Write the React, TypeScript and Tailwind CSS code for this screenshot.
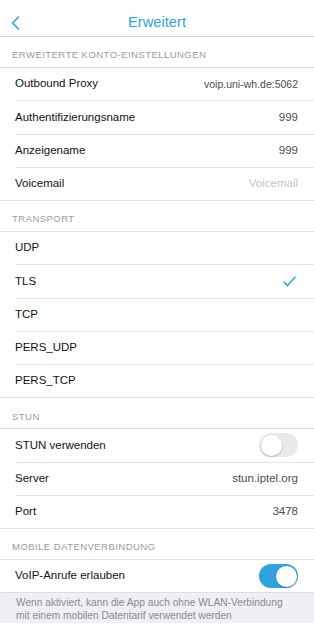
import React from "react";

const font = { fontFamily: '"Liberation Sans", Arial, sans-serif' };

function Header({ text }: { text: string }) {
  return (
    <div className="h-[31px] flex items-end pb-[7px] pl-[12px] border-b border-[#dedede] text-[9.6px] text-[#9b9b9f] tracking-[0.4px] leading-none">
      {text}
    </div>
  );
}

function Row({
  label,
  last,
  children,
}: {
  label: string;
  last?: boolean;
  children?: React.ReactNode;
}) {
  return (
    <div className={`h-[33.25px] pl-[15px] bg-white ${last ? "border-b border-[#dedede]" : ""}`}>
      <div
        className={`h-full flex items-center justify-between pr-[16px] ${last ? "" : "border-b border-[#e3e3e3]"}`}
      >
        <span className="text-[11.5px] text-[#111111] leading-none">{label}</span>
        {children}
      </div>
    </div>
  );
}

function Value({ text, placeholder, small }: { text: string; placeholder?: boolean; small?: boolean }) {
  return (
    <span
      className={`leading-none ${small ? "text-[10.5px]" : "text-[11.5px]"} ${placeholder ? "text-[#c4c4c8]" : "text-[#4d4d4d]"}`}
    >
      {text}
    </span>
  );
}

function Check() {
  return (
    <svg width="13" height="11" viewBox="0 0 13 11" className="mr-[2px]">
      <path d="M1 6 L4.6 9.6 L12 1" fill="none" stroke="#2fa3df" strokeWidth="1.5" strokeLinecap="round" strokeLinejoin="round" />
    </svg>
  );
}

function Toggle({ on }: { on: boolean }) {
  if (on) {
    return (
      <div className="w-[39px] h-[24px] rounded-full bg-[#2fa3df] flex items-center justify-end pr-[1.5px]">
        <div className="w-[21px] h-[21px] rounded-full bg-white shadow-[0_1px_2px_rgba(0,0,0,0.25)]" />
      </div>
    );
  }
  return (
    <div className="w-[39px] h-[24px] rounded-full bg-[#e9e9ea] flex items-center justify-start pl-[1.5px]">
      <div className="w-[21px] h-[21px] rounded-full bg-white shadow-[0_1px_2px_rgba(0,0,0,0.25)]" />
    </div>
  );
}

export default function App() {
  return (
    <div className="w-[314px] h-[633px] bg-white overflow-hidden" style={font}>
      <div className="h-[37px] border-b border-[#cfcfd1] relative flex items-center justify-center pt-[8px]">
        <svg width="9" height="14" viewBox="0 0 9 14" className="absolute left-[11px] top-[16px]">
          <path d="M7.5 1 L1.5 7 L7.5 13" fill="none" stroke="#2fa3df" strokeWidth="1.6" strokeLinecap="round" strokeLinejoin="round" />
        </svg>
        <span className="text-[14.7px] text-[#2ba6de] leading-none">Erweitert</span>
      </div>

      <Header text="ERWEITERTE KONTO-EINSTELLUNGEN" />
      <Row label="Outbound Proxy">
        <Value text="voip.uni-wh.de:5062" small />
      </Row>
      <Row label="Authentifizierungsname">
        <Value text="999" />
      </Row>
      <Row label="Anzeigename">
        <Value text="999" />
      </Row>
      <Row label="Voicemail" last>
        <Value text="Voicemail" placeholder />
      </Row>

      <Header text="TRANSPORT" />
      <Row label="UDP" />
      <Row label="TLS">
        <Check />
      </Row>
      <Row label="TCP" />
      <Row label="PERS_UDP" />
      <Row label="PERS_TCP" last />

      <Header text="STUN" />
      <Row label="STUN verwenden">
        <Toggle on={false} />
      </Row>
      <Row label="Server">
        <Value text="stun.iptel.org" />
      </Row>
      <Row label="Port" last>
        <Value text="3478" />
      </Row>

      <Header text="MOBILE DATENVERBINDUNG" />
      <Row label="VoIP-Anrufe erlauben" last>
        <Toggle on={true} />
      </Row>
      <div className="h-[30px] bg-[#efeff4] pl-[16px] pr-[26px] pt-[4px] text-[10.2px] leading-[12.5px] text-[#8a8a8f]">
        Wenn aktiviert, kann die App auch ohne WLAN-Verbindung mit einem mobilen Datentarif verwendet werden
      </div>
    </div>
  );
}
